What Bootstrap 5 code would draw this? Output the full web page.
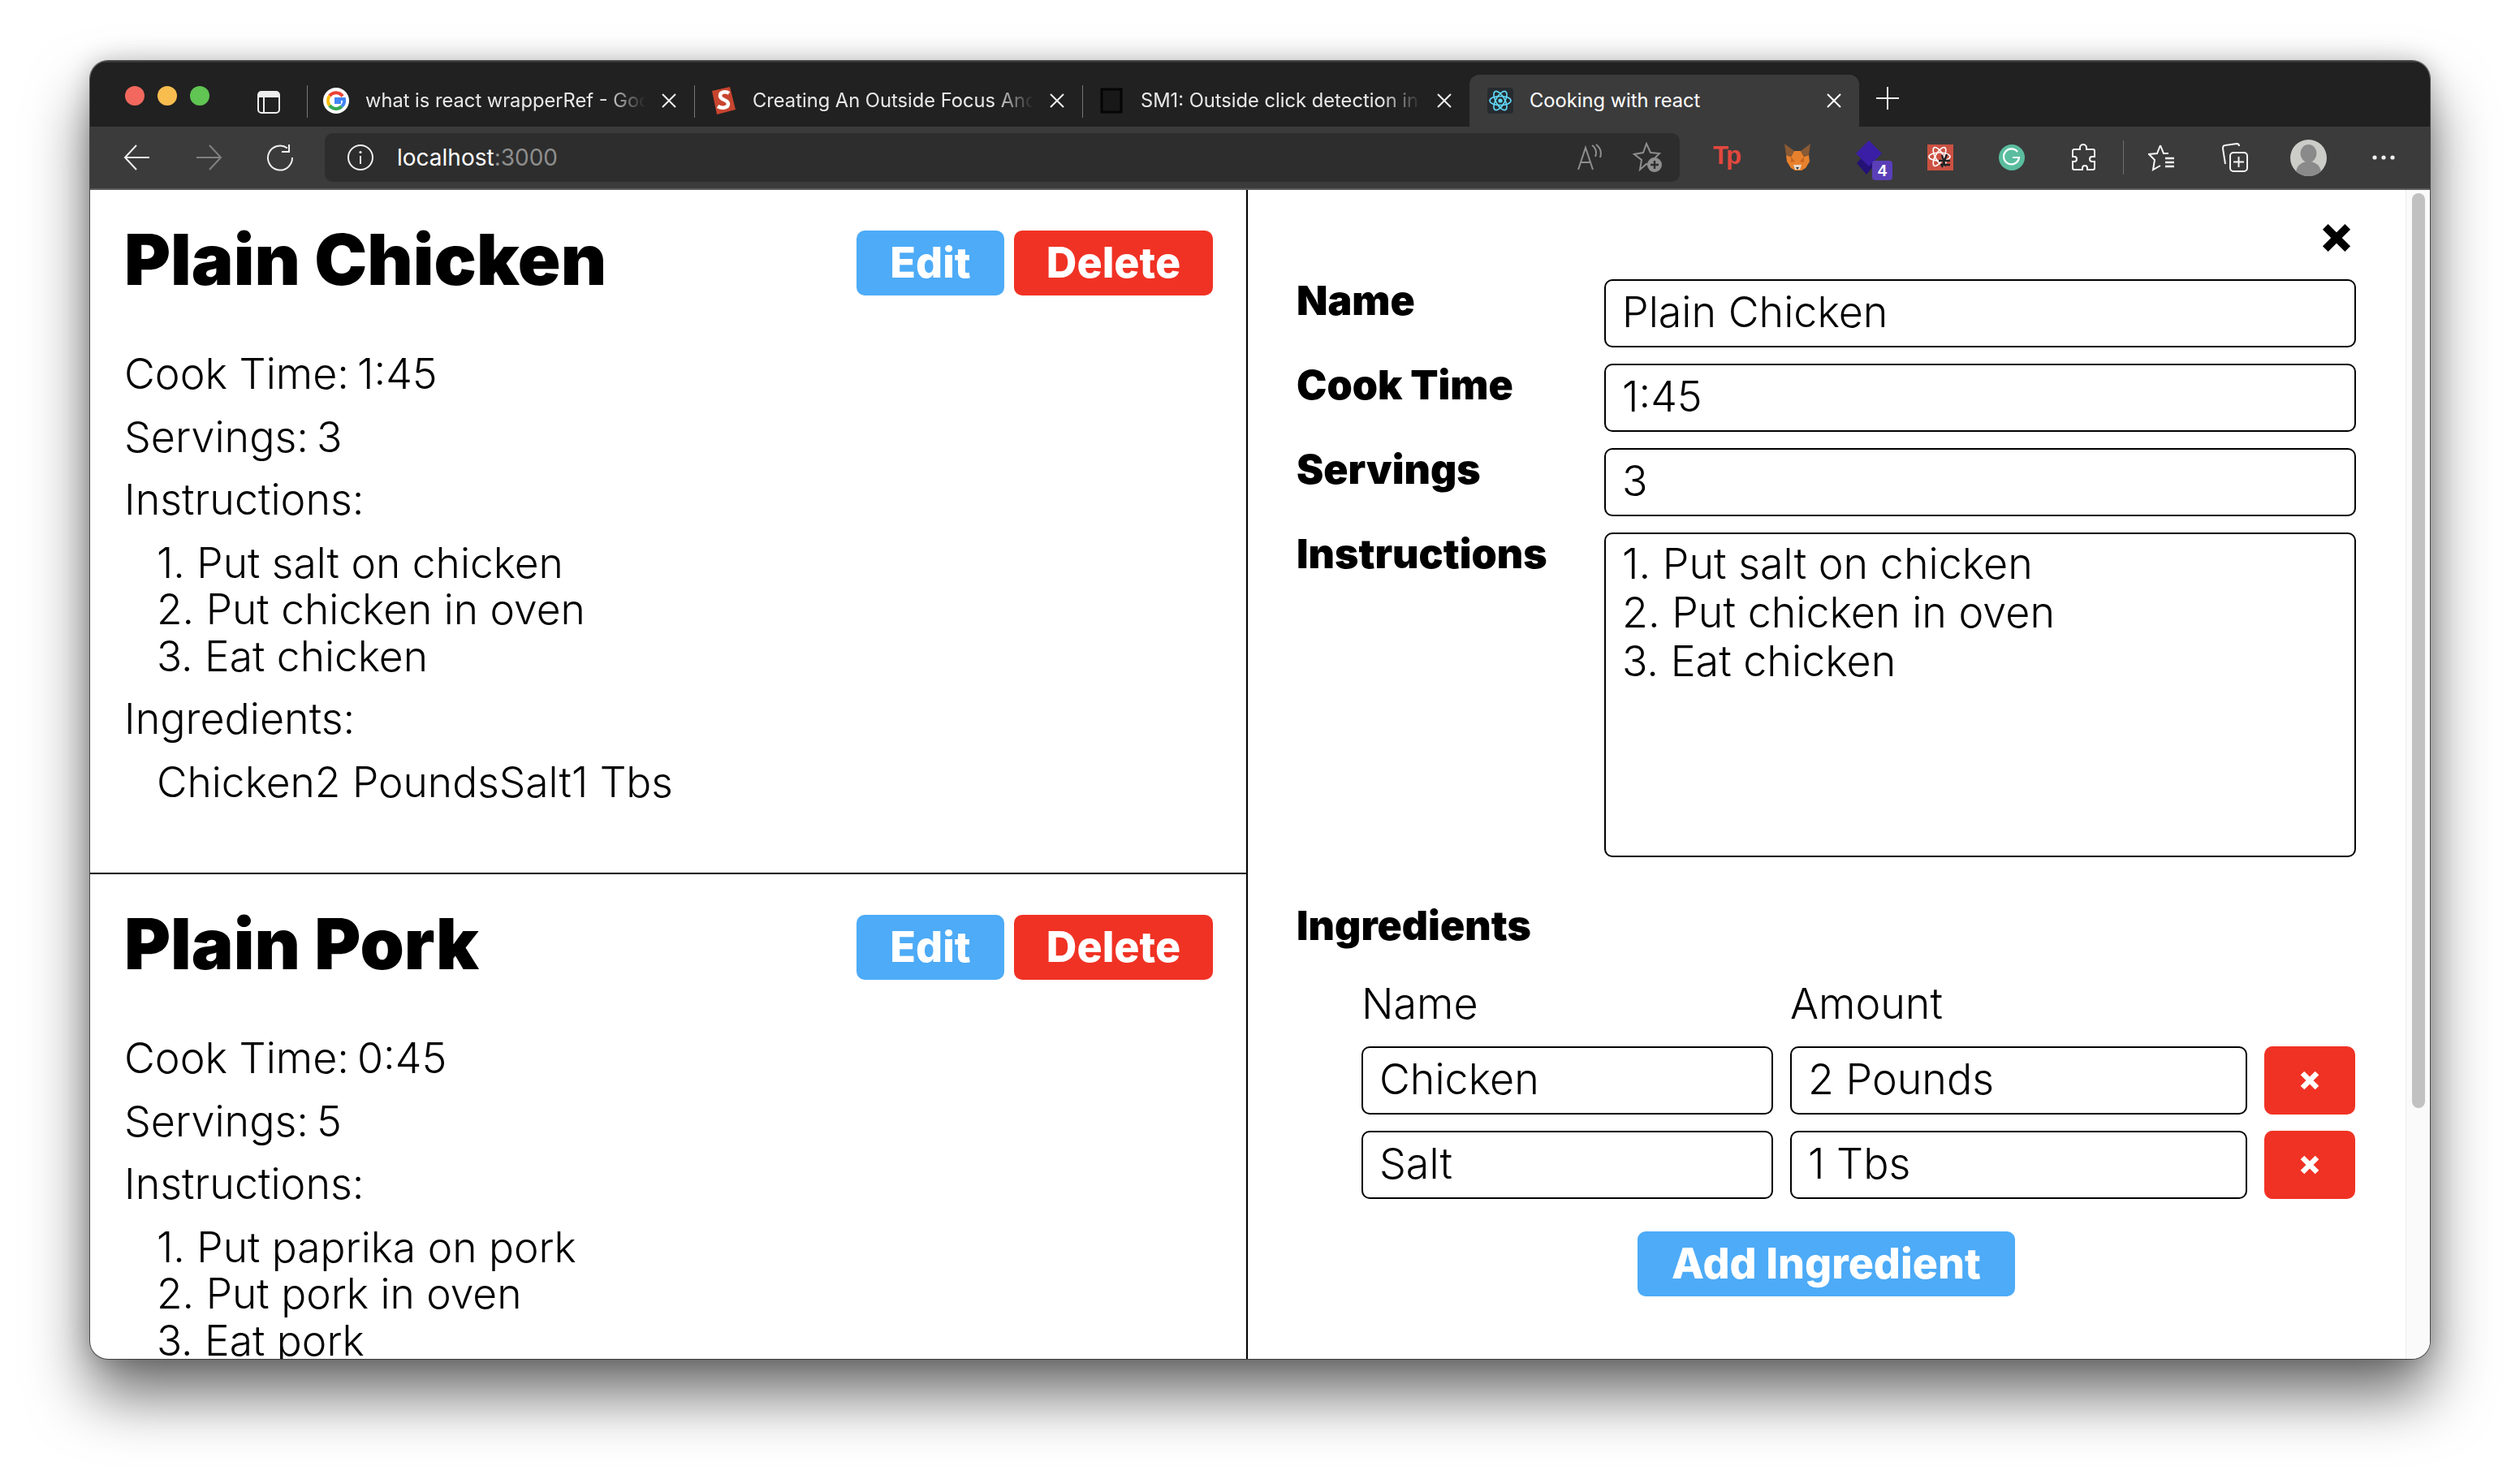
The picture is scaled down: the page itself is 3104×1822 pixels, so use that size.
<!DOCTYPE html>
<html lang="en">
<head>
<meta charset="UTF-8">
<title>Cooking with react</title>
<link href="https://cdn.jsdelivr.net/npm/bootstrap@5.3.3/dist/css/bootstrap.min.css" rel="stylesheet">
<style>
html, body { margin: 0; height: 1822px; background: #fff; overflow: hidden; }
body { font-family: "Inter", "Liberation Sans", sans-serif; color: #000; }
.win { margin: 75px 0 0 111px; width: 2882px; height: 1599px; border-radius: 22px; overflow: hidden; background: #fff; box-shadow: 0 0 0 1px rgba(40,40,40,.75), 0 44px 76px rgba(0,0,0,.58), 0 0 30px rgba(0,0,0,.22); }

/* browser chrome */
.tabstrip { height: 81px; background: #212121; border-top: 2px solid #3a3a3a; color: #e8e8e8; font-size: 23.7px; }
.lights { padding: 29px 0 0 43px; gap: 16px; width: 267px; }
.light { width: 24px; height: 24px; border-radius: 50%; }
.tabitem { width: 477px; height: 64px; margin-top: 15px; position: relative; padding: 0 22px 0 20px; gap: 20px; }
.tabitem svg { flex: none; }
.tabitem.sep::before { content: ""; position: absolute; left: 0; top: 13px; height: 40px; border-left: 1px solid #777; }
.tabitem.on { background: #3b3b3b; border-radius: 12px 12px 0 0; width: 480px; color: #fff; padding-left: 22px; }
.tabname { flex: 1; min-width: 0; white-space: nowrap; -webkit-mask-image: linear-gradient(90deg, #000 86%, transparent 100%); mask-image: linear-gradient(90deg, #000 86%, transparent 100%); }
.on .tabname { -webkit-mask-image: none; mask-image: none; }
.toolbar { height: 76px; background: #3b3b3b; }
.navbtn { width: 88px; height: 76px; }
.addr { width: 1669px; height: 60px; background: #2d2d2d; border-radius: 10px; color: #fff; font-size: 28px; padding: 0 20px 0 28px; margin-left: 11px; }
.addr .dim { color: #8e8e8e; }
.toolsep { width: 1px; height: 42px; background: #6e6e6e; }
.chromeline { height: 2px; background: #5c5c5c; }

/* app */
.panes { height: 1440px; }
.leftpane { width: 1426px; border-right: 2px solid #000; overflow: hidden; flex: none; }
.rcp { height: 843px; padding: 50px 41px 0 42px; border-bottom: 2px solid #000; flex: none; }
.rcptitle { font-size: 87px; font-weight: 900; line-height: 1; margin: -8px 0 0 0; }
.rcpbtns { gap: 12px; }
.bluebtn, .redbtn { height: 80px; border: 0; border-radius: 10px; color: #fff; font-weight: 800; font-size: 52px; line-height: 1; padding: 0; display: flex; align-items: center; justify-content: center; }
.bluebtn, .bluebtn:hover { background: #4dabf7; color: #fff; }
.redbtn, .redbtn:hover { background: #f03224; color: #fff; }
.editbtn { width: 182px; }
.delbtn { width: 245px; }
.rcpline { font-size: 52px; line-height: 58px; margin-bottom: 19.5px; font-weight: 300; }
.rcpline .val { margin-left: 10px; }
.rcpfirst { margin-top: 68px; }
.rcplist { font-size: 51.5px; line-height: 57.5px; padding-left: 40px; margin-bottom: 19.5px; font-weight: 300; }
.rcpindent { padding-left: 40px; font-size: 51.5px; }

.rightpane { flex: 1; padding: 0 61px 0 60px; }
.closerow { height: 110px; padding: 40px 5px 0 0; }
.formrow { margin-bottom: 20px; }
.formlabel { width: 379px; flex: none; font-size: 50px; font-weight: 900; line-height: 1; margin-top: 1px; }
.forminput, .forminput:focus { height: 84px; border: 2px solid #000; border-radius: 10px; font-size: 52px; padding: 0 20px 3px; font-weight: 300; color: #000; font-family: inherit; box-shadow: none; line-height: 60px; }
.formarea, .formarea:focus { height: 400px; padding-top: 7px; resize: none; }
.inghead { font-size: 50px; font-weight: 900; line-height: 1; margin: 59px 0 0 0; }
.ingrid { display: grid; grid-template-columns: 507px 563px 112px; column-gap: 21px; row-gap: 20px; margin: 46px 0 0 80px; align-items: center; }
.inghd { font-size: 52px; font-weight: 300; line-height: 1; margin-bottom: 6px; }
.ingx { height: 84px; width: 112px; }
.addrow { margin-top: 40px; }
.addbtn { width: 465px; }
.scrolltrack { width: 30px; flex: none; background: #fafafa; border-left: 1px solid #ececec; padding: 4px 6px 0 7px; }
.scrollthumb { height: 1127px; background: #c1c1c1; border-radius: 8px; }
</style>
</head>
<body>
<div class="win">
  <div class="tabstrip d-flex">
    <div class="lights d-flex">
      <div class="light" style="background:#f2685e"></div>
      <div class="light" style="background:#f8bd4f"></div>
      <div class="light" style="background:#60c553"></div>
      <svg class="ms-auto" style="margin:6px 33px 0 0" width="28" height="28" viewBox="0 0 28 28"><rect x="1" y="1" width="26" height="26" rx="4" fill="none" stroke="#eee" stroke-width="2"/><path d="M1 5a4 4 0 0 1 4-4h18a4 4 0 0 1 4 4v3H1z" fill="#eee"/><path d="M8 8v19" stroke="#eee" stroke-width="2"/></svg>
    </div>
    <div class="tabitem sep d-flex align-items-center">
      <svg width="32" height="32" viewBox="0 0 32 32"><circle cx="16" cy="16" r="16" fill="#fff"/><path d="M24 10.5A10 10 0 0 0 8 10" fill="none" stroke="#ea4335" stroke-width="4"/><path d="M8 10a10 10 0 0 0 0 12" fill="none" stroke="#fbbc05" stroke-width="4"/><path d="M8 22a10 10 0 0 0 15 1" fill="none" stroke="#34a853" stroke-width="4"/><path d="M23 23a10 10 0 0 0 3-9H16v4h6" fill="none" stroke="#4285f4" stroke-width="4"/></svg>
      <span class="tabname">what is react wrapperRef - Goo</span>
      <svg width="18" height="18" viewBox="0 0 18 18"><path d="M1 1l16 16M17 1L1 17" stroke="#eee" stroke-width="2"/></svg>
    </div>
    <div class="tabitem sep d-flex align-items-center" style="width:478px">
      <svg width="32" height="36" viewBox="0 0 32 36"><path d="M2 6l22-5 7 28-23 6z" fill="#c8452f"/><path d="M23 9c-4-3-11-2-11 3 0 6 10 4 10 10 0 5-8 6-13 3" fill="none" stroke="#fff" stroke-width="4.5"/></svg>
      <span class="tabname">Creating An Outside Focus And</span>
      <svg width="18" height="18" viewBox="0 0 18 18"><path d="M1 1l16 16M17 1L1 17" stroke="#eee" stroke-width="2"/></svg>
    </div>
    <div class="tabitem sep d-flex align-items-center">
      <svg width="32" height="32" viewBox="0 0 32 32"><rect x="4" y="2" width="24" height="28" fill="#181818" stroke="#050505" stroke-width="3"/></svg>
      <span class="tabname">SM1: Outside click detection in</span>
      <svg width="18" height="18" viewBox="0 0 18 18"><path d="M1 1l16 16M17 1L1 17" stroke="#eee" stroke-width="2"/></svg>
    </div>
    <div class="tabitem on d-flex align-items-center">
      <svg width="32" height="32" viewBox="0 0 32 32"><rect width="32" height="32" rx="4" fill="#262b30"/><g fill="none" stroke="#61dafb" stroke-width="1.6"><ellipse cx="16" cy="16" rx="13" ry="5.5"/><ellipse cx="16" cy="16" rx="13" ry="5.5" transform="rotate(60 16 16)"/><ellipse cx="16" cy="16" rx="13" ry="5.5" transform="rotate(120 16 16)"/></g><circle cx="16" cy="16" r="2.6" fill="#61dafb"/></svg>
      <span class="tabname">Cooking with react</span>
      <svg width="18" height="18" viewBox="0 0 18 18"><path d="M1 1l16 16M17 1L1 17" stroke="#fff" stroke-width="2"/></svg>
    </div>
    <svg style="margin:30px 0 0 21px" width="28" height="28" viewBox="0 0 28 28"><path d="M14 0v28M0 14h28" stroke="#eee" stroke-width="2"/></svg>
  </div>

  <div class="toolbar d-flex align-items-center">
    <div class="navbtn d-flex align-items-center justify-content-center" style="margin-left:14px">
      <svg width="34" height="34" viewBox="0 0 34 34"><path d="M32 17H2M16 2L2 17l14 15" fill="none" stroke="#f0f0f0" stroke-width="2"/></svg>
    </div>
    <div class="navbtn d-flex align-items-center justify-content-center">
      <svg width="34" height="34" viewBox="0 0 34 34"><path d="M2 17h30M18 2l14 15-14 15" fill="none" stroke="#808080" stroke-width="2"/></svg>
    </div>
    <div class="navbtn d-flex align-items-center justify-content-center">
      <svg width="34" height="34" viewBox="0 0 34 34"><path d="M26 5.5A15 15 0 1 0 32 17M28 1v9h-9" fill="none" stroke="#f0f0f0" stroke-width="2"/></svg>
    </div>
    <div class="addr d-flex align-items-center">
      <svg width="32" height="32" viewBox="0 0 32 32"><circle cx="16" cy="16" r="15" fill="none" stroke="#f0f0f0" stroke-width="2"/><path d="M16 14v10" stroke="#f0f0f0" stroke-width="2"/><circle cx="16" cy="9.5" r="1.6" fill="#f0f0f0"/></svg>
      <span style="margin-left:29px">localhost<span class="dim">:3000</span></span>
      <svg class="ms-auto" width="34" height="34" viewBox="0 0 34 34"><path d="M3 32L12 5l9 27M6 23h12" fill="none" stroke="#8e8e8e" stroke-width="2"/><path d="M20 2c5 3 6 9 4 14M25 1c5 4 7 10 5 16" fill="none" stroke="#8e8e8e" stroke-width="2"/></svg>
      <svg style="margin-left:36px" width="38" height="38" viewBox="0 0 38 38"><path d="M17 2l5 11 11 1-8 8 2 9-10-4-8 7 2-12-9-7 11-2z" fill="none" stroke="#8e8e8e" stroke-width="2"/><circle cx="27" cy="28" r="9" fill="#8e8e8e"/><path d="M27 23v10M22 28h10" stroke="#2d2d2d" stroke-width="2.4"/></svg>
    </div>
    <div class="d-flex align-items-center" style="margin-left:13px">
      <div class="navbtn d-flex align-items-center justify-content-center">
        <svg width="44" height="44" viewBox="0 0 44 44"><text x="22" y="30" text-anchor="middle" font-family="Liberation Sans" font-weight="700" font-size="31" fill="#e2483e" letter-spacing="-3">Tp</text></svg>
      </div>
      <div class="navbtn d-flex align-items-center justify-content-center">
        <svg width="32" height="34" viewBox="0 0 32 34"><path d="M2 14l6 2 4-7h8l4 7 6-2 1 8-5 8-5 3h-8l-5-3-5-8z" fill="#e8812d"/><path d="M0 0l12 9-4 7-6-2zM32 0L20 9l4 7 6-2z" fill="#8a5a34"/><path d="M11 26h10l-2 6h-6z" fill="#e6d8c8"/><path d="M14 29h4l-2 3z" fill="#333"/><path d="M8 16l5 6-5 1zM24 16l-5 6 5 1z" fill="#c8651f"/></svg>
      </div>
      <div class="navbtn d-flex align-items-center justify-content-center position-relative">
        <svg width="32" height="42" viewBox="0 0 32 42"><path d="M1 28l12-13 12 13-12 14z" fill="#241277"/><path d="M0 16L16 0l16 16-16 16z" fill="#3a1ea6"/></svg>
        <span class="position-absolute d-flex align-items-center justify-content-center" style="left:48px;top:42px;width:25px;height:24px;background:#5a3fb8;border-radius:4px;color:#fff;font:700 20px 'Liberation Sans',sans-serif">4</span>
      </div>
      <div class="navbtn d-flex align-items-center justify-content-center">
        <svg width="32" height="32" viewBox="0 0 32 32"><rect width="32" height="32" fill="#cb5142"/><g fill="none" stroke="#fff" stroke-width="1.6"><ellipse cx="15" cy="15" rx="13" ry="5"/><ellipse cx="15" cy="15" rx="13" ry="5" transform="rotate(60 15 15)"/><ellipse cx="15" cy="15" rx="13" ry="5" transform="rotate(120 15 15)"/></g><path d="M18 13l4 14M24 12l-6 16M14 20h14M16 25h12" stroke="#222" stroke-width="2.4"/></svg>
      </div>
      <div class="navbtn d-flex align-items-center justify-content-center">
        <svg width="32" height="32" viewBox="0 0 32 32"><circle cx="16" cy="16" r="16" fill="#5abd9e"/><path d="M23 9a9.5 9.5 0 1 0 2 7h-8" fill="none" stroke="#fff" stroke-width="2.2"/></svg>
      </div>
      <div class="navbtn d-flex align-items-center justify-content-center">
        <svg width="30" height="34" viewBox="0 0 30 34"><path d="M11 5a4 4 0 0 1 8 0v2h8a2 2 0 0 1 2 2v7h-3a3 3 0 0 0 0 6h3v8a2 2 0 0 1-2 2h-7v-2a3 3 0 0 0-6 0v2H4a2 2 0 0 1-2-2v-8h2a3 3 0 0 0 0-6H2V9a2 2 0 0 1 2-2h7z" fill="none" stroke="#f5f5f5" stroke-width="2"/></svg>
      </div>
      <div class="toolsep" style="margin-left:5px"></div>
      <div class="navbtn d-flex align-items-center justify-content-center" style="margin-left:3px">
        <svg width="34" height="34" viewBox="0 0 34 34"><path d="M15 2l4 10h6M15 2l-4 10-10 1 7 7-2 12 9-5" fill="none" stroke="#f5f5f5" stroke-width="2"/><path d="M21 18h11M21 23h11M21 28h11" stroke="#f5f5f5" stroke-width="2.4"/></svg>
      </div>
      <div class="navbtn d-flex align-items-center justify-content-center" style="margin-left:2px">
        <svg width="34" height="36" viewBox="0 0 34 36"><path d="M5 26L2 7c0-2 1-4 3-4l14-2c2 0 3 1 3 3" fill="none" stroke="#f5f5f5" stroke-width="2"/><rect x="11" y="12" width="21" height="23" rx="4" fill="#3b3b3b" stroke="#f5f5f5" stroke-width="2"/><path d="M21.5 17v13M15 23.500h13" stroke="#f5f5f5" stroke-width="2"/></svg>
      </div>
      <div class="navbtn d-flex align-items-center justify-content-center" style="margin-left:2px">
        <svg width="45" height="45" viewBox="0 0 45 45"><circle cx="22.500" cy="22.500" r="22.500" fill="#ccccc8"/><ellipse cx="22.500" cy="17" rx="10" ry="11" fill="#8a8a8a"/><path d="M7 39c2-9 9-12 15.500-12S36 30 38 39a22.500 22.500 0 0 1-31 0z" fill="#8a8a8a"/></svg>
      </div>
      <div class="navbtn d-flex align-items-center justify-content-center" style="margin-left:5px">
        <svg width="28" height="6" viewBox="0 0 28 6"><circle cx="3" cy="3" r="2.600" fill="#f0f0f0"/><circle cx="14" cy="3" r="2.600" fill="#f0f0f0"/><circle cx="25" cy="3" r="2.600" fill="#f0f0f0"/></svg>
      </div>
    </div>
  </div>
  <div class="chromeline"></div>

  <div class="panes d-flex">
    <div class="leftpane d-flex flex-column">
      <section class="rcp">
        <div class="d-flex justify-content-between align-items-start">
          <h1 class="rcptitle">Plain Chicken</h1>
          <div class="d-flex rcpbtns">
            <button class="btn bluebtn editbtn">Edit</button>
            <button class="btn redbtn delbtn">Delete</button>
          </div>
        </div>
        <div class="rcpline rcpfirst">Cook Time:<span class="val">1:45</span></div>
        <div class="rcpline">Servings:<span class="val">3</span></div>
        <div class="rcpline">Instructions:</div>
        <div class="rcplist">1. Put salt on chicken<br>2. Put chicken in oven<br>3. Eat chicken</div>
        <div class="rcpline">Ingredients:</div>
        <div class="rcpline rcpindent">Chicken2 PoundsSalt1 Tbs</div>
      </section>
      <section class="rcp">
        <div class="d-flex justify-content-between align-items-start">
          <h1 class="rcptitle">Plain Pork</h1>
          <div class="d-flex rcpbtns">
            <button class="btn bluebtn editbtn">Edit</button>
            <button class="btn redbtn delbtn">Delete</button>
          </div>
        </div>
        <div class="rcpline rcpfirst">Cook Time:<span class="val">0:45</span></div>
        <div class="rcpline">Servings:<span class="val">5</span></div>
        <div class="rcpline">Instructions:</div>
        <div class="rcplist">1. Put paprika on pork<br>2. Put pork in oven<br>3. Eat pork</div>
      </section>
    </div>

    <div class="rightpane">
      <div class="closerow d-flex justify-content-end align-items-start">
        <svg width="38" height="38" viewBox="0 0 36 36"><path d="M5 5l26 26M31 5L5 31" stroke="#000" stroke-width="9"/></svg>
      </div>
      <div class="formrow d-flex"><div class="formlabel">Name</div><input class="form-control forminput" value="Plain Chicken"></div>
      <div class="formrow d-flex"><div class="formlabel">Cook Time</div><input class="form-control forminput" value="1:45"></div>
      <div class="formrow d-flex"><div class="formlabel">Servings</div><input class="form-control forminput" value="3"></div>
      <div class="formrow d-flex"><div class="formlabel">Instructions</div><textarea class="form-control forminput formarea">1. Put salt on chicken
2. Put chicken in oven
3. Eat chicken</textarea></div>
      <div class="inghead">Ingredients</div>
      <div class="ingrid">
        <div class="inghd">Name</div><div class="inghd">Amount</div><div></div>
        <input class="form-control forminput" value="Chicken"><input class="form-control forminput" value="2 Pounds">
        <button class="btn redbtn ingx"><svg width="26" height="26" viewBox="0 0 26 26"><path d="M4 4l18 18M22 4L4 22" stroke="#fff" stroke-width="6.500"/></svg></button>
        <input class="form-control forminput" value="Salt"><input class="form-control forminput" value="1 Tbs">
        <button class="btn redbtn ingx"><svg width="26" height="26" viewBox="0 0 26 26"><path d="M4 4l18 18M22 4L4 22" stroke="#fff" stroke-width="6.500"/></svg></button>
      </div>
      <div class="addrow d-flex justify-content-center">
        <button class="btn bluebtn addbtn">Add Ingredient</button>
      </div>
    </div>
    <div class="scrolltrack"><div class="scrollthumb"></div></div>
  </div>
</div>
</body>
</html>
